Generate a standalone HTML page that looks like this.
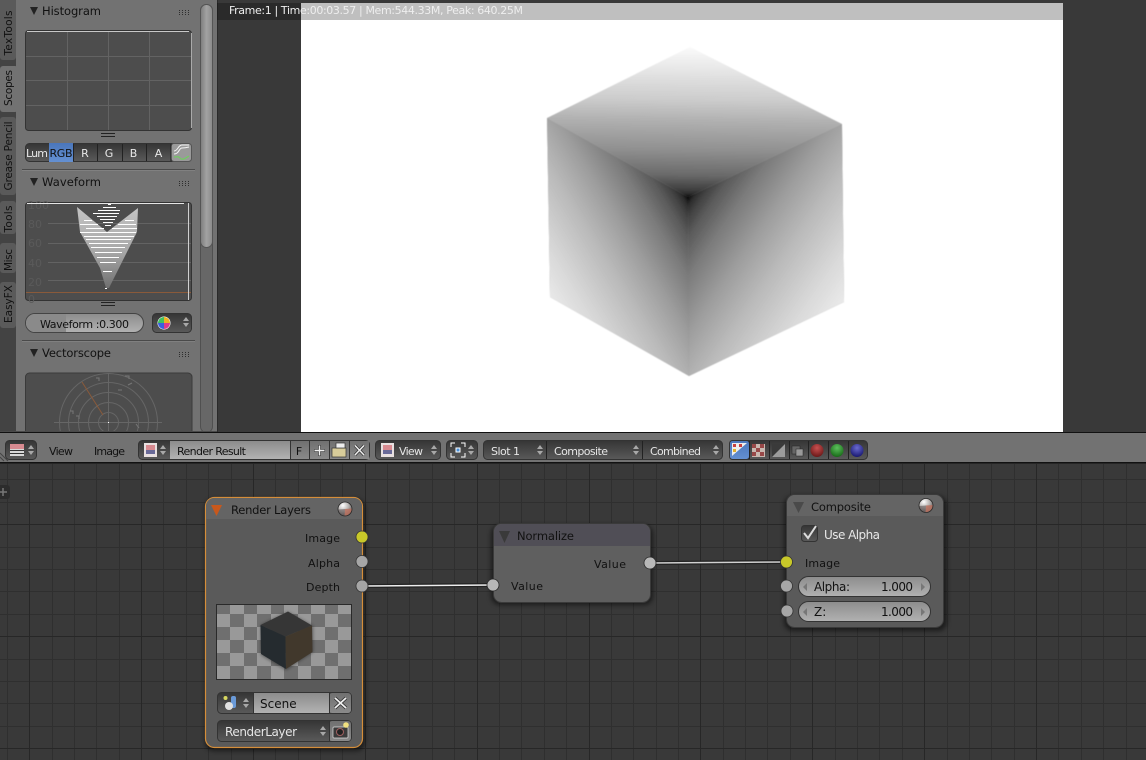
<!DOCTYPE html>
<html><head><meta charset="utf-8"><style>
html,body{margin:0;padding:0;background:#393939;width:1146px;height:760px;overflow:hidden}
svg{display:block;font-family:"DejaVu Sans","Liberation Sans",sans-serif;font-size:11px}
.h{font-size:11.5px;fill:#111}
</style></head><body>
<svg width="1146" height="760" viewBox="0 0 1146 760" xmlns="http://www.w3.org/2000/svg">
<defs>
<linearGradient id="wd" x1="0" y1="0" x2="0" y2="1"><stop offset="0" stop-color="#353535"/><stop offset="1" stop-color="#5a5a5a"/></linearGradient>
<linearGradient id="wl" x1="0" y1="0" x2="0" y2="1"><stop offset="0" stop-color="#8c8c8c"/><stop offset="1" stop-color="#b2b2b2"/></linearGradient>
<linearGradient id="wg" x1="0" y1="0" x2="0" y2="1"><stop offset="0" stop-color="#707070"/><stop offset="1" stop-color="#8a8a8a"/></linearGradient>
<linearGradient id="bl" x1="0" y1="0" x2="0" y2="1"><stop offset="0" stop-color="#4a76bb"/><stop offset="1" stop-color="#6490d2"/></linearGradient>
<linearGradient id="th" x1="0" y1="0" x2="1" y2="0"><stop offset="0" stop-color="#7c7c7c"/><stop offset=".5" stop-color="#a2a2a2"/><stop offset="1" stop-color="#8a8a8a"/></linearGradient>
<linearGradient id="wf" x1="0" y1="0" x2="0" y2="1"><stop offset="0" stop-color="#c4c4c4"/><stop offset=".55" stop-color="#a8a8a8"/><stop offset="1" stop-color="#707070"/></linearGradient>
<linearGradient id="cl" gradientUnits="userSpaceOnUse" x1="688" y1="197" x2="511" y2="305"><stop offset="0" stop-color="#080808"/><stop offset=".02" stop-color="#2b2b2b"/><stop offset=".05" stop-color="#414141"/><stop offset=".1" stop-color="#5a5a5a"/><stop offset=".2" stop-color="#7b7b7b"/><stop offset=".35" stop-color="#9e9e9e"/><stop offset=".5" stop-color="#bababa"/><stop offset=".7" stop-color="#d9d9d9"/><stop offset="1" stop-color="#fff"/></linearGradient>
<linearGradient id="cr" gradientUnits="userSpaceOnUse" x1="688" y1="197" x2="874" y2="325"><stop offset="0" stop-color="#080808"/><stop offset=".02" stop-color="#2b2b2b"/><stop offset=".05" stop-color="#414141"/><stop offset=".1" stop-color="#5a5a5a"/><stop offset=".2" stop-color="#7b7b7b"/><stop offset=".35" stop-color="#9e9e9e"/><stop offset=".5" stop-color="#bababa"/><stop offset=".7" stop-color="#d9d9d9"/><stop offset="1" stop-color="#fff"/></linearGradient>
<linearGradient id="ct" gradientUnits="userSpaceOnUse" x1="688" y1="197" x2="690" y2="45"><stop offset="0" stop-color="#080808"/><stop offset=".02" stop-color="#2b2b2b"/><stop offset=".05" stop-color="#404040"/><stop offset=".145" stop-color="#6a6a6a"/><stop offset=".31" stop-color="#909090"/><stop offset=".5" stop-color="#b0b0b0"/><stop offset=".64" stop-color="#cccccc"/><stop offset=".85" stop-color="#e8e8e8"/><stop offset="1" stop-color="#fcfcfc"/></linearGradient>
<radialGradient id="ball" cx=".35" cy=".25" r=".85"><stop offset="0" stop-color="#fff"/><stop offset=".5" stop-color="#b4b0ae"/><stop offset="1" stop-color="#4a4444"/></radialGradient>
<radialGradient id="rb" cx=".5" cy=".3" r=".7"><stop offset="0" stop-color="#c85050"/><stop offset="1" stop-color="#6a1818"/></radialGradient>
<radialGradient id="gb" cx=".5" cy=".3" r=".7"><stop offset="0" stop-color="#5cc05c"/><stop offset="1" stop-color="#186a18"/></radialGradient>
<radialGradient id="ub" cx=".5" cy=".3" r=".7"><stop offset="0" stop-color="#6a6ad0"/><stop offset="1" stop-color="#181870"/></radialGradient>
<filter id="sh" x="-15%" y="-15%" width="130%" height="130%"><feGaussianBlur stdDeviation="2.5"/></filter>
<filter id="sb"><feGaussianBlur stdDeviation="1.5"/></filter>
<filter id="cb" x="-5%" y="-5%" width="110%" height="110%"><feGaussianBlur stdDeviation=".5"/></filter>
<clipPath id="vs"><rect x="25" y="372" width="167" height="60"/></clipPath>
<g id="ud"><path d="M0 4 L3 0 L6 4Z M0 6 L3 10 L6 6Z" fill="#a8a8a8"/></g>
<g id="grip" fill="#2e2e2e"><rect x="0" y="0" width="1" height="1"/><rect x="3" y="0" width="1" height="1"/><rect x="6" y="0" width="1" height="1"/><rect x="9" y="0" width="1" height="1"/><rect x="0" y="2" width="1" height="1"/><rect x="3" y="2" width="1" height="1"/><rect x="6" y="2" width="1" height="1"/><rect x="9" y="2" width="1" height="1"/><rect x="0" y="4" width="1" height="1"/><rect x="3" y="4" width="1" height="1"/><rect x="6" y="4" width="1" height="1"/><rect x="9" y="4" width="1" height="1"/></g>
<g id="img"><rect x="0" y="0" width="13" height="14" fill="#e8e0e0"/><rect x="2" y="2" width="9" height="5" fill="#d88a90"/><rect x="2" y="7" width="9" height="4" fill="#6a6a98"/></g>
<g id="mat"><circle r="7" fill="url(#ball)"/><path d="M0 0 L6.800 -.5 A7 7 0 0 1 -.5 6.800Z" fill="#b9705e" opacity=".85"/><path d="M0 0 L-6.800 .5 A7 7 0 0 0 -.5 6.800Z" fill="#5a5050" opacity=".55"/><circle r="7" fill="none" stroke="#2a2a2a" stroke-width=".8"/></g>
</defs>

<!-- left panel -->
<rect x="0" y="0" width="218" height="433" fill="#727272"/>
<rect x="0" y="0" width="16" height="433" fill="#434343"/>
<rect x="0" y="-4" width="16" height="64" rx="3" fill="#5a5a5a"/>
<rect x="0" y="66" width="18" height="46" rx="3" fill="#727272"/>
<rect x="0" y="117" width="16" height="78" rx="3" fill="#5a5a5a"/>
<rect x="0" y="201" width="16" height="33" rx="3" fill="#5a5a5a"/>
<rect x="0" y="243" width="16" height="30" rx="3" fill="#5a5a5a"/>
<rect x="0" y="282" width="16" height="46" rx="3" fill="#5a5a5a"/>
<g text-anchor="middle" fill="#111" font-size="10.500">
<text transform="translate(12,33) rotate(-90)" textLength="45">TexTools</text>
<text transform="translate(12,88) rotate(-90)" textLength="36">Scopes</text>
<text transform="translate(12,156) rotate(-90)" textLength="69">Grease Pencil</text>
<text transform="translate(12,219) rotate(-90)" textLength="27">Tools</text>
<text transform="translate(12,260) rotate(-90)" textLength="22">Misc</text>
<text transform="translate(12,304) rotate(-90)" textLength="38">EasyFX</text>
</g>
<!-- scrollbar -->
<rect x="200.500" y="4.500" width="12" height="428" rx="6" fill="#676767" stroke="#505050"/>
<rect x="200.500" y="4.500" width="12" height="243" rx="6" fill="url(#th)" stroke="#555"/>

<!-- Histogram -->
<path d="M30 7 H38 L34 15Z" fill="#222"/>
<text x="42" y="15" class="h" textLength="59">Histogram</text>
<use href="#grip" x="179" y="10"/>
<rect x="25.500" y="30.500" width="166" height="100" rx="3" fill="#4d4d4d" stroke="#333"/>
<path d="M67.500 32V130M108.500 32V130M149.500 32V130M26 56.500H191M26 80.500H191M26 105.500H191" stroke="#636363"/>
<path d="M27 31.500H189" stroke="#c8c8c8"/><path d="M191.500 33V128" stroke="#aaa"/>
<path d="M101 133.500H115M101 136.500H115" stroke="#222"/>
<rect x="25.500" y="143.500" width="166" height="18" rx="4" fill="url(#wd)" stroke="#333"/>
<rect x="49" y="143" width="24" height="19" fill="url(#bl)"/>
<rect x="171" y="143.500" width="20.500" height="18" rx="3" fill="#9a9a9a" stroke="#555"/>
<path d="M73.500 144V161M97.500 144V161M122.500 144V161M146.500 144V161M171 144V161" stroke="#222"/>
<g text-anchor="middle" fill="#e8e8e8"><text x="37" y="157" textLength="22">Lum</text><text x="61" y="157" fill="#111" textLength="23">RGB</text><text x="85" y="157">R</text><text x="109" y="157">G</text><text x="133.500" y="157">B</text><text x="158.500" y="157">A</text></g>
<path d="M174 151c4 0 4-6 8-6s4 0 7 0M174 154c5 0 5-6 8-6s3 0 7-1" stroke="#f4f4f4" stroke-width="1" fill="none"/>
<path d="M174 157c4 0 4-1 6 1s3 2 9-2" stroke="#6fcf5f" stroke-width="1.200" fill="none"/>
<path d="M22 169.500H195" stroke="#4a4a4a"/><path d="M22 170.500H195" stroke="#808080"/>

<!-- Waveform -->
<path d="M30 178 H38 L34 186Z" fill="#222"/>
<text x="42" y="186" class="h" textLength="59">Waveform</text>
<use href="#grip" x="179" y="181"/>
<rect x="25.500" y="202.500" width="166" height="98" rx="3" fill="#4d4d4d" stroke="#333"/>
<path d="M48 223.500H191M48 243.500H191M48 262.500H191M48 280.500H191" stroke="#636363"/>
<g fill="#5a5a5a"><text x="28" y="209">100</text><text x="28" y="228">80</text><text x="28" y="247">60</text><text x="28" y="267">40</text><text x="28" y="286">20</text><text x="28" y="303">0</text></g>
<path d="M26 292.500H191" stroke="#8a5a3a"/>
<path d="M27 203.500H184" stroke="#e6e6e6"/><path d="M188.500 203V300" stroke="#d0d0d0"/>
<path d="M77 207L107 232L138 208L137 232L119 268L109 288H106L100 268L80 232Z" fill="url(#wf)"/>
<path d="M108 204.500H111M103 207.500H116M98 210.500H120M93 213.500H119M97 216.500H117M100 219.500H115M103 222.500H113M105 225.500H111M84 220.500H92M125 220.500H134M80 224.500H98M118 224.500H136M86 228.500H104M112 228.500H137M80 232.500H136M84 236.500H134M86 239.500H131M89 243.500H128M91 247.500H125M95 252.500H122M97 257.500H119M100 262.500H116M103 271.500H112M105 288.500H107" stroke="#fff" stroke-width="1"/>
<path d="M101 302.500H115M101 305.500H115" stroke="#222"/>
<rect x="25.500" y="313.500" width="118" height="19" rx="9.500" fill="url(#wl)" stroke="#444"/>
<path d="M35 314H66V332H35A9 9 0 0 1 35 314Z" fill="#8a8a8a"/>
<text x="84.500" y="328" text-anchor="middle" fill="#111" textLength="89">Waveform :0.300</text>
<rect x="152.500" y="313.500" width="39" height="19" rx="4" fill="url(#wd)" stroke="#333"/>
<circle cx="164" cy="323" r="6.500" fill="#fff"/>
<path d="M164 323V317A6 6 0 0 1 170 323Z" fill="#f0b020"/><path d="M164 323H170A6 6 0 0 1 164 329Z" fill="#e03a8a"/><path d="M164 323V329A6 6 0 0 1 158 323Z" fill="#3a60e0"/><path d="M164 323H158A6 6 0 0 1 164 317Z" fill="#40c060"/>
<use href="#ud" x="183" y="317"/>
<path d="M22 340.500H195" stroke="#4a4a4a"/><path d="M22 341.500H195" stroke="#808080"/>

<!-- Vectorscope -->
<path d="M30 349 H38 L34 357Z" fill="#222"/>
<text x="42" y="357" class="h" textLength="69">Vectorscope</text>
<use href="#grip" x="179" y="352"/>
<path d="M25.500 432V377a4 4 0 0 1 4-4H188a4 4 0 0 1 4 4V432Z" fill="#4d4d4d" stroke="#3a3a3a"/>
<g clip-path="url(#vs)">
<g fill="none" stroke="#666"><circle cx="108.500" cy="422.500" r="10"/><circle cx="108.500" cy="422.500" r="20"/><circle cx="108.500" cy="422.500" r="30"/><circle cx="108.500" cy="422.500" r="40"/><circle cx="108.500" cy="422.500" r="49"/><path d="M54 422.500H162M108.500 374V432"/></g>
<path d="M103 415L82 382" stroke="#8a5a3a"/>
<rect x="108" y="422" width="1" height="1" fill="#fff"/>
<g stroke="#777" fill="none"><path d="M96 378h3v3M125 376h4v3M128 385l4-2M118 390h4M70 411h3v3M76 416h3v3M136 424l3 4"/></g>
</g>
<rect x="0" y="431" width="218" height="2" fill="#4a4a4a"/>

<!-- viewer -->
<rect x="217" y="0" width="929" height="433" fill="#393939"/>
<rect x="217" y="0" width="1" height="433" fill="#2a2a2a"/>
<rect x="301" y="3" width="762" height="429" fill="#fff"/>
<g filter="url(#cb)">
<polygon points="688,197 842,124 844,302 689,376 550,297 547,118" fill="#8a8a8a"/>
<polygon points="690,47 842,124 688,197 547,118" fill="url(#ct)"/>
<polygon points="547,118 688,197 689,376 550,297" fill="url(#cl)"/>
<polygon points="842,124 688,197 689,376 844,302" fill="url(#cr)"/>
</g>
<rect x="217" y="3" width="846" height="17" fill="#000" opacity=".25"/>
<text x="229" y="14" fill="#eee" textLength="294">Frame:1 | Time:00:03.57 | Mem:544.33M, Peak: 640.25M</text>

<!-- header -->
<rect x="0" y="432" width="1146" height="1" fill="#111"/>
<rect x="0" y="433" width="1146" height="29" fill="#727272"/>
<rect x="0" y="462" width="1146" height="1.500" fill="#111"/>
<path d="M0 453L8 461M0 457L4 461" stroke="#444"/>

<rect x="5.500" y="440.500" width="31" height="19" rx="4" fill="url(#wd)" stroke="#333"/>
<rect x="10" y="444" width="14" height="12" fill="#d8d8d8"/><rect x="10" y="444" width="14" height="5" fill="#d88a90"/><path d="M10 450.500h14M10 453.500h14" stroke="#333"/>
<use href="#ud" x="28" y="445"/>
<text x="61" y="455" text-anchor="middle" fill="#111" textLength="24">View</text>
<text x="109.500" y="455" text-anchor="middle" fill="#111" textLength="31">Image</text>

<rect x="138.500" y="440.500" width="231" height="19" rx="4" fill="url(#wd)" stroke="#333"/>
<use href="#img" x="144" y="443"/><use href="#ud" x="160" y="445"/>
<rect x="170" y="441" width="120" height="18" fill="url(#wl)"/>
<text x="177" y="455" fill="#111" textLength="69">Render Result</text>
<rect x="290" y="441" width="79" height="18" fill="url(#wg)"/>
<path d="M290.500 441V459M309.500 441V459M329.500 441V459M349.500 441V459" stroke="#333"/>
<text x="299" y="455" text-anchor="middle" fill="#111">F</text>
<path d="M319.500 445V456M314 450.500H325" stroke="#333" stroke-width="2.600"/><path d="M319.500 445.500V455.500M314.500 450.500H324.500" stroke="#eee" stroke-width="1.400"/>
<rect x="332" y="448" width="14" height="9" fill="#d8cc9a" stroke="#333" stroke-width=".7"/><rect x="336" y="443" width="9" height="5" fill="#eee" stroke="#333" stroke-width=".7"/>
<path d="M355 445.500L364 455M364 445.500L355 455" stroke="#333" stroke-width="3"/><path d="M355 445.500L364 455M364 445.500L355 455" stroke="#eee" stroke-width="1.500"/>

<rect x="375.500" y="440.500" width="65" height="19" rx="4" fill="url(#wd)" stroke="#333"/>
<use href="#img" x="381" y="443"/><use href="#ud" x="431" y="445"/>
<text x="399" y="455" fill="#e6e6e6" textLength="24">View</text>

<rect x="446.500" y="440.500" width="31" height="19" rx="4" fill="url(#wd)" stroke="#333"/>
<path d="M451 447V443H455M461 443H465V447M451 453V457H455M461 457H465V453" stroke="#fff" fill="none"/>
<rect x="456" y="448" width="4" height="4" fill="#4a90d8" stroke="#fff"/>
<use href="#ud" x="468" y="445"/>

<rect x="483.500" y="440.500" width="239" height="19" rx="4" fill="url(#wd)" stroke="#333"/>
<path d="M546.500 441V459M642.500 441V459" stroke="#222"/>
<text x="491" y="455" fill="#e6e6e6" textLength="29">Slot 1</text><use href="#ud" x="537" y="445"/>
<text x="554" y="455" fill="#e6e6e6" textLength="54">Composite</text><use href="#ud" x="633" y="445"/>
<text x="650" y="455" fill="#e6e6e6" textLength="51">Combined</text><use href="#ud" x="713" y="445"/>

<rect x="729.500" y="440.500" width="138" height="19" rx="4" fill="url(#wd)" stroke="#333"/>
<rect x="729.500" y="440.500" width="20" height="19" rx="3" fill="url(#bl)" stroke="#333"/>
<path d="M732 443H747L732 456Z" fill="#eee"/><path d="M733 444h3v3h-3zM739 444h3v3h-3z" fill="#c84040"/><path d="M733 449h3v3h-3z" fill="#e0b030"/>
<path d="M749.500 441V459M769.500 441V459M789.500 441V459M808.500 441V459M828.500 441V459M848.500 441V459" stroke="#222"/>
<rect x="752" y="444" width="13" height="13" fill="#c8b8b0"/><path d="M752 444h4v4h-4zM760 444h4v4h-4zM756 448h4v4h-4zM752 452h4v4h-4zM760 452h4v4h-4z" fill="#984848"/>
<rect x="772" y="444" width="13" height="13" fill="#3a3a3a"/><path d="M772 457L785 444V457Z" fill="#9c9c9c"/>
<rect x="792" y="446" width="8" height="8" fill="#666" stroke="#222" stroke-width=".5"/><rect x="796" y="449" width="7" height="7" fill="#999" stroke="#222" stroke-width=".5"/>
<circle cx="817" cy="450.500" r="6.500" fill="url(#rb)"/><circle cx="837" cy="450.500" r="6.500" fill="url(#gb)"/><circle cx="857" cy="450.500" r="6.500" fill="url(#ub)"/>

<!-- node editor grid -->
<path d="M7.500 464V760M52.500 464V760M74.500 464V760M96.500 464V760M119.500 464V760M163.500 464V760M186.500 464V760M208.500 464V760M231.500 464V760M275.500 464V760M298.500 464V760M320.500 464V760M342.500 464V760M387.500 464V760M409.500 464V760M432.500 464V760M454.500 464V760M499.500 464V760M521.500 464V760M544.500 464V760M566.500 464V760M611.500 464V760M633.500 464V760M656.500 464V760M678.500 464V760M723.500 464V760M745.500 464V760M767.500 464V760M790.500 464V760M835.500 464V760M857.500 464V760M879.500 464V760M902.500 464V760M947.500 464V760M969.500 464V760M991.500 464V760M1014.500 464V760M1058.500 464V760M1081.500 464V760M1103.500 464V760M1126.500 464V760M0 479.500H1146M0 502.500H1146M0 547.500H1146M0 569.500H1146M0 591.500H1146M0 614.500H1146M0 659.500H1146M0 681.500H1146M0 703.500H1146M0 726.500H1146" stroke="#2f2f2f" fill="none"/>
<path d="M29.500 464V760M141.500 464V760M253.500 464V760M365.500 464V760M477.500 464V760M589.500 464V760M700.500 464V760M812.500 464V760M924.500 464V760M1036.500 464V760M0 524.500H1146M0 636.500H1146M0 748.500H1146" stroke="#272727" fill="none"/>
<rect x="-6" y="485" width="16" height="14" rx="3" fill="#2c2c2c"/>
<path d="M3 488V496M-1 492H7" stroke="#777" stroke-width="1.500"/>

<!-- links -->
<path d="M362 586L493 585" stroke="#222" stroke-width="4"/><path d="M362 586L493 585" stroke="#eee" stroke-width="1.500"/>
<path d="M650 563L786 562" stroke="#222" stroke-width="4"/><path d="M650 563L786 562" stroke="#d0d0d0" stroke-width="1.500"/>

<!-- Render Layers node -->
<rect x="205" y="499" width="160" height="252" rx="9" fill="#000" opacity=".5" filter="url(#sh)"/>
<rect x="205.500" y="497.500" width="157" height="250" rx="9" fill="#5a5a5a" stroke="#d58e3a" stroke-width="1.200"/>
<path d="M206 519V506a8 8 0 0 1 8-8H354a8 8 0 0 1 8 8V519Z" fill="#646464"/>
<path d="M211 505H222L216.500 516Z" fill="#c8581c"/>
<text x="231" y="514" class="h" textLength="80">Render Layers</text>
<use href="#mat" x="345" y="509"/>
<g text-anchor="end" fill="#111"><text x="340" y="542" textLength="35">Image</text><text x="340" y="567" textLength="32">Alpha</text><text x="340" y="591" textLength="34">Depth</text></g>
<circle cx="362" cy="537" r="6" fill="#c8c829" stroke="#333" stroke-width=".8"/>
<circle cx="362" cy="561.500" r="6" fill="#a6a6a6" stroke="#333" stroke-width=".8"/>
<circle cx="362" cy="586" r="6" fill="#a6a6a6" stroke="#333" stroke-width=".8"/>

<!-- preview -->
<rect x="216.500" y="604.500" width="135" height="75" fill="#999"/>
<path d="M217 605h13v9h-13zM244 605h13v9h-13zM271 605h13v9h-13zM298 605h13v9h-13zM325 605h13v9h-13zM230 614h14v13h-14zM257 614h14v13h-14zM284 614h14v13h-14zM311 614h14v13h-14zM338 614h13v13h-13zM217 627h13v13h-13zM244 627h13v13h-13zM271 627h13v13h-13zM298 627h13v13h-13zM325 627h13v13h-13zM230 640h14v13h-14zM257 640h14v13h-14zM284 640h14v13h-14zM311 640h14v13h-14zM338 640h13v13h-13zM217 653h13v13h-13zM244 653h13v13h-13zM271 653h13v13h-13zM298 653h13v13h-13zM325 653h13v13h-13zM230 666h14v13h-14zM257 666h14v13h-14zM284 666h14v13h-14zM311 666h14v13h-14zM338 666h13v13h-13z" fill="#6f6f6f"/>
<polygon points="288,612 313,626 313,652 286,670 261,655 261,625" fill="#000" opacity=".4" filter="url(#sb)"/>
<polygon points="288,611.500 312,625.500 285.500,636.500 260.500,625" fill="#363636"/>
<polygon points="260.500,625 285.500,636.500 286,669 261,654" fill="#252b2f"/>
<polygon points="312,625.500 285.500,636.500 286,669 312.500,652" fill="#41382c"/>
<rect x="216.500" y="604.500" width="135" height="75" fill="none" stroke="#2a2a2a"/>

<!-- scene row -->
<rect x="217.500" y="692.500" width="134" height="21" rx="4" fill="url(#wd)" stroke="#333"/>
<rect x="253" y="693" width="76" height="20" fill="url(#wl)"/>
<rect x="329" y="693" width="22" height="20" rx="3" fill="url(#wg)"/>
<path d="M253.500 693V713M329.500 693V713" stroke="#333"/>
<circle cx="225.500" cy="698" r="2" fill="#d8d860"/><rect x="231" y="696" width="5" height="12" rx="2" fill="#6a9ad8"/><circle cx="229" cy="706" r="4" fill="#e0e0e0"/>
<use href="#ud" x="243" y="698"/>
<text x="260" y="708" fill="#111" font-size="12">Scene</text>
<path d="M335 698L346 708M346 698L335 708" stroke="#333" stroke-width="3.400"/><path d="M335 698L346 708M346 698L335 708" stroke="#f0f0f0" stroke-width="1.800"/>
<!-- layer row -->
<rect x="217.500" y="720.500" width="134" height="21" rx="4" fill="url(#wd)" stroke="#333"/>
<rect x="329" y="721" width="22" height="20" rx="3" fill="url(#wg)"/>
<path d="M329.500 721V741" stroke="#333"/>
<text x="225" y="736" fill="#e6e6e6" font-size="12" textLength="72">RenderLayer</text>
<use href="#ud" x="320" y="726"/>
<rect x="333" y="727" width="15" height="11" rx="1" fill="#3a3a3a" stroke="#ddd" stroke-width=".7"/><circle cx="340" cy="732" r="3.500" fill="#222" stroke="#a06060"/><circle cx="346" cy="725" r="2.800" fill="#f0e080"/>

<!-- Normalize node -->
<rect x="491" y="525" width="162" height="80" rx="9" fill="#000" opacity=".5" filter="url(#sh)"/>
<rect x="493.500" y="523.500" width="157" height="79" rx="8" fill="#5f5f5f" stroke="#3a3a3a"/>
<path d="M494 546V532a8 8 0 0 1 8-8H642a8 8 0 0 1 8 8V546Z" fill="#504e56"/>
<path d="M499 531H510L504.500 543Z" fill="#3a3a3a"/>
<text x="517" y="540" class="h" textLength="57">Normalize</text>
<text x="626" y="568" text-anchor="end" fill="#111" textLength="32">Value</text>
<text x="511" y="590" fill="#111" textLength="32">Value</text>
<circle cx="650" cy="563" r="6" fill="#b8b8b8" stroke="#2a2a2a" stroke-width=".8"/>
<circle cx="493" cy="585" r="6" fill="#b8b8b8" stroke="#2a2a2a" stroke-width=".8"/>

<!-- Composite node -->
<rect x="784" y="496" width="163" height="135" rx="9" fill="#000" opacity=".5" filter="url(#sh)"/>
<rect x="786.500" y="494.500" width="157" height="133" rx="8" fill="#5a5a5a" stroke="#3a3a3a"/>
<path d="M787 516V503a8 8 0 0 1 8-8H935a8 8 0 0 1 8 8V516Z" fill="#646464"/>
<path d="M793 502H804L798.500 513Z" fill="#4a4a4a"/>
<text x="811" y="511" class="h" textLength="60">Composite</text>
<use href="#mat" x="926" y="505.500"/>
<rect x="801.500" y="525.500" width="16" height="16" rx="3" fill="url(#wd)" stroke="#333"/>
<path d="M804 533L808 538L816 526" stroke="#dcdcdc" stroke-width="2" fill="none"/>
<text x="824" y="539" fill="#e8e8e8" font-size="12" textLength="56">Use Alpha</text>
<text x="805" y="567" fill="#111" textLength="35">Image</text>
<circle cx="786.500" cy="562" r="6" fill="#c8c829" stroke="#333" stroke-width=".8"/>
<circle cx="786.500" cy="586" r="6" fill="#a6a6a6" stroke="#333" stroke-width=".8"/>
<circle cx="787" cy="611" r="6" fill="#a6a6a6" stroke="#333" stroke-width=".8"/>
<rect x="798.500" y="576.500" width="132" height="20" rx="10" fill="url(#wl)" stroke="#333"/>
<rect x="798.500" y="601.500" width="132" height="20" rx="10" fill="url(#wl)" stroke="#333"/>
<path d="M803 587L807 583V591ZM925 587L921 583V591ZM803 612L807 608V616ZM925 612L921 608V616Z" fill="#777"/>
<text x="814" y="591" fill="#111" font-size="12" textLength="36">Alpha:</text><text x="913" y="591" text-anchor="end" fill="#111" font-size="12" textLength="32">1.000</text>
<text x="814" y="616" fill="#111" font-size="12">Z:</text><text x="913" y="616" text-anchor="end" fill="#111" font-size="12" textLength="32">1.000</text>
</svg>
</body></html>
